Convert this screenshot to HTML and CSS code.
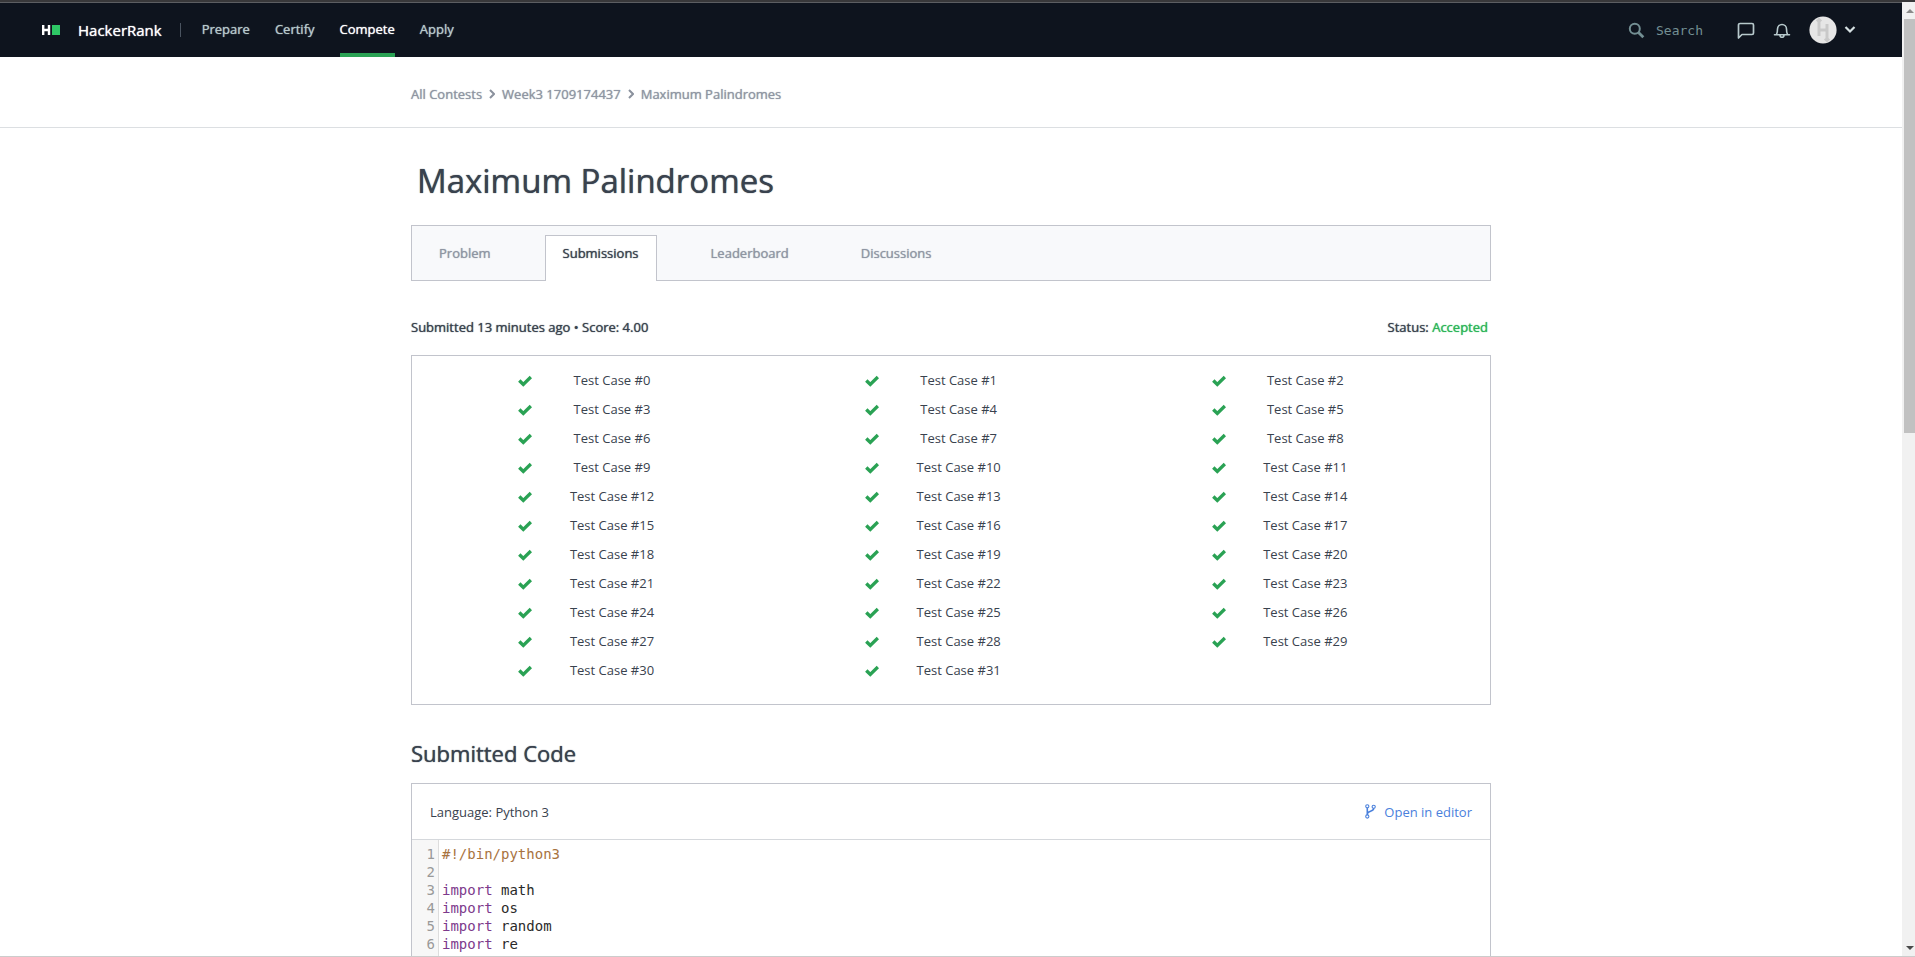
FILE: index.html
```
<!DOCTYPE html>
<html lang="en">
<head>
<meta charset="utf-8">
<title>Maximum Palindromes | HackerRank</title>
<link rel="stylesheet" href="styles.css">
</head>
<body>
<div class="window">
  <div class="page">
    <header class="topbar">
      <a class="brand" href="#">
        <svg class="logo" width="20" height="12" viewBox="0 0 20 12" aria-hidden="true"><path d="M2.2 1v10M8 1v10M2 6H8" stroke="#fff" stroke-width="2.4" fill="none"/><rect x="11" y="1" width="8" height="10" fill="#2ec866"/></svg>
        <span>HackerRank</span>
      </a>
      <span class="divider"></span>
      <nav class="mainnav">
        <a href="#">Prepare</a>
        <a href="#">Certify</a>
        <a class="current" href="#">Compete</a>
        <a href="#">Apply</a>
      </nav>
      <div class="tools">
        <label class="search">
          <svg width="17" height="17" viewBox="0 0 17 17" fill="none" stroke="#738f93" aria-hidden="true"><circle cx="6.8" cy="6.8" r="5" stroke-width="2"/><path d="M10.5 10.5l4.8 4.8" stroke-width="2.8"/></svg>
          <input type="text" placeholder="Search" aria-label="Search">
        </label>
        <button class="icon" aria-label="Messages"><svg width="18" height="18" viewBox="0 0 18 18" fill="none" stroke="#b7c9cc" stroke-width="1.7" stroke-linejoin="round"><path d="M1.5 17V4a1.5 1.5 0 0 1 1.5-1.5h12a1.5 1.5 0 0 1 1.5 1.5v8a1.5 1.5 0 0 1-1.5 1.5H5z"/></svg></button>
        <button class="icon" aria-label="Notifications"><svg width="18" height="18" viewBox="0 0 18 18" fill="none" stroke="#b7c9cc" stroke-width="1.6" stroke-linecap="round" stroke-linejoin="round"><path d="M1.5 13.7h15M3.5 13.5c.8-1.5 1-3 1-5.5a4.5 4.5 0 0 1 9 0c0 2.5.2 4 1 5.5M7 14.3a2 2 0 0 0 4 0"/></svg></button>
        <button class="account" aria-label="Account">
          <svg width="28" height="28" viewBox="0 0 28 28"><circle cx="14" cy="14" r="13.6" fill="#e6e6e6"/><path d="M10 4v16M18 8v16M10 14h8M8 5.5l2-2 2 2M16 22.5l2 2 2-2" stroke="#c9c9c9" stroke-width="3" fill="none"/></svg>
          <svg width="12" height="8" viewBox="0 0 12 8"><path d="M1.5 1L6 5.5l4.5-4.5" fill="none" stroke="#d5e0e2" stroke-width="2.2"/></svg>
        </button>
      </div>
    </header>

    <div class="crumbbar">
      <nav class="wrap crumbs" aria-label="Breadcrumb">
        <a href="#">All Contests</a>
        <svg width="6" height="10" viewBox="0 0 6 10"><path d="M1 1l4 4-4 4"/></svg>
        <a href="#">Week3 1709174437</a>
        <svg width="6" height="10" viewBox="0 0 6 10"><path d="M1 1l4 4-4 4"/></svg>
        <a href="#">Maximum Palindromes</a>
      </nav>
    </div>

    <main class="wrap">
      <h1>Maximum Palindromes</h1>
      <nav class="tabs">
        <a href="#">Problem</a>
        <a class="active" href="#">Submissions</a>
        <a href="#">Leaderboard</a>
        <a href="#">Discussions</a>
      </nav>
      <div class="summary">
        <p>Submitted 13 minutes ago • Score: 4.00</p>
        <p>Status: <span class="accepted">Accepted</span></p>
      </div>
      <svg class="defs" width="0" height="0" aria-hidden="true"><symbol id="tick" viewBox="0 0 14 12"><path d="M1.3 5.5l4 3.9L12.9 2" fill="none" stroke="#2aa254" stroke-width="3.4"/></symbol></svg>
      <ul class="cases" id="cases"></ul>

      <h2>Submitted Code</h2>
      <section class="code">
        <div class="codehead">
          <span>Language: Python 3</span>
          <a href="#"><svg width="11" height="15" viewBox="0 0 11 15" fill="none" stroke="#4a80dc" stroke-width="1.1"><circle cx="2.3" cy="2.3" r="1.6"/><circle cx="2.3" cy="12.5" r="1.6"/><circle cx="8.7" cy="2.8" r="1.6"/><path d="M2.3 4v7M8.7 4.5c0 3.5-6.4 2-6.4 5.5" stroke-width="1.6"/></svg>Open in editor</a>
        </div>
        <div class="editor">
<pre class="gutter">1
2
3
4
5
6</pre>
<pre class="source"><span class="comment">#!/bin/python3</span>

<span class="kw">import</span> math
<span class="kw">import</span> os
<span class="kw">import</span> random
<span class="kw">import</span> re</pre>
        </div>
      </section>
    </main>
  </div>
  <div class="scrollbar" aria-hidden="true">
    <span class="arrow up"></span>
    <span class="thumb"></span>
    <span class="arrow down"></span>
  </div>
</div>
<script src="cases.js"></script>
</body>
</html>
```
FILE: cases.js
```
const list = document.getElementById('cases');
for (let i = 0; i < 32; i++) {
  const item = document.createElement('li');
  item.innerHTML = '<svg width="14" height="12"><use href="#tick"/></svg><span>Test Case #' + i + '</span>';
  list.appendChild(item);
}
```
FILE: styles.css
```
* { box-sizing: border-box; }
body { margin: 0; background: #fff; color: #39424e; font: 13px/20px "Open Sans", "Noto Sans", sans-serif; }
a { color: inherit; text-decoration: none; }
button { background: none; border: 0; padding: 0; display: flex; align-items: center; }
p, h1, h2, ul, pre { margin: 0; padding: 0; }
.window { display: flex; height: 100vh; overflow: hidden; border-top: 2px solid #38383a; border-bottom: 1px solid #ccc; }
.page { flex: 1; min-width: 0; overflow: hidden; }
.brand, .mainnav, .crumbs, h1, h2, .tabs, .summary { font-weight: 400; text-shadow: 0 0 1px currentColor; }
.topbar { display: flex; align-items: center; height: 55px; padding: 0 46px 0 41px; background: #0e141e; border-top: 1px solid #5c5e62; color: #b7c9cc; }
.brand { display: flex; align-items: center; gap: 17px; padding-bottom: 1px; color: #fff; font-size: 15px; }
.divider { width: 1px; height: 14px; margin: 0 21px 0 18px; background: #4a5460; }
.mainnav { display: flex; gap: 25px; align-self: stretch; }
.mainnav a { display: flex; align-items: center; padding-bottom: 2px; border-top: 4px solid transparent; border-bottom: 4px solid transparent; }
.mainnav .current { color: #fff; border-bottom-color: #2aa254; }
.tools { display: flex; align-items: center; margin-left: auto; }
.search { display: flex; align-items: center; gap: 11px; margin-right: 19px; }
.search input { width: 62px; padding: 0; border: 0; outline: 0; background: none; font: 13px "DejaVu Sans Mono", monospace; }
.search input::placeholder { color: #738f93; opacity: 1; }
.icon { margin-right: 18px; }
.account { gap: 7px; }
.crumbbar { border-bottom: 1px solid #dcdfe2; }
.wrap { width: 100%; max-width: 1080px; margin: 0 auto; }
.crumbs { display: flex; align-items: center; gap: 7px; height: 70px; padding-top: 4px; color: #8f96a3; }
.crumbs svg { fill: none; stroke: #8a919d; stroke-width: 2; }
h1 { padding: 29px 6px 21px; font-size: 33px; line-height: 47px; }
.tabs { display: flex; gap: 36px; height: 56px; padding: 9px 9px 0; background: #f8f9fb; border: 1px solid #c2c4cc; color: #8f96a3; }
.tabs a { height: 46px; padding: 7px 17px; border: 1px solid transparent; border-bottom: 0; }
.tabs .active { background: #fff; border-color: #c2c4cc; color: #39424e; }
.summary { display: flex; justify-content: space-between; padding: 36px 3px 18px 0; }
.accepted { color: #2bb457; }
.defs { display: block; }
.cases { display: grid; grid-template-columns: repeat(3, 1fr); padding: 10px 20px 19px 18px; border: 1px solid #c2c4cc; list-style: none; }
.cases li { display: grid; grid-template-columns: 3fr 5fr 5fr 7fr; align-items: center; justify-items: center; line-height: 29px; white-space: nowrap; }
.cases svg { grid-column: 2; }
h2 { padding: 33px 0 15px; font-size: 22px; line-height: 30px; }
.code { border: 1px solid #c2c4cc; }
.codehead { display: flex; align-items: center; justify-content: space-between; height: 56px; padding: 0 18px; border-bottom: 1px solid #d5d8dc; }
.codehead a { display: flex; align-items: center; gap: 8px; color: #4a80dc; }
.editor { display: flex; min-height: 240px; font: 14px/18px "DejaVu Sans Mono", monospace; }
.editor pre { font: inherit; padding: 5px 3px 4px; }
.editor .gutter { width: 27px; background: #f7f7f7; border-right: 1px solid #ddd; color: #999; text-align: right; }
.editor .source { color: #2a2a2a; }
.editor .comment { color: #a8733f; }
.editor .kw { color: #7d3a8c; }
.scrollbar { display: flex; flex-direction: column; align-items: center; width: 13px; padding: 7px 0 6px 2px; background: #f1f1f1; }
.arrow { border: 4px solid transparent; }
.up { border-top: 0; border-bottom-color: #8a8a8a; }
.down { border-bottom: 0; border-top-color: #4a4a4a; margin-top: auto; }
.thumb { width: 100%; height: 44%; margin-top: 6px; background: #c1c1c1; }
```
